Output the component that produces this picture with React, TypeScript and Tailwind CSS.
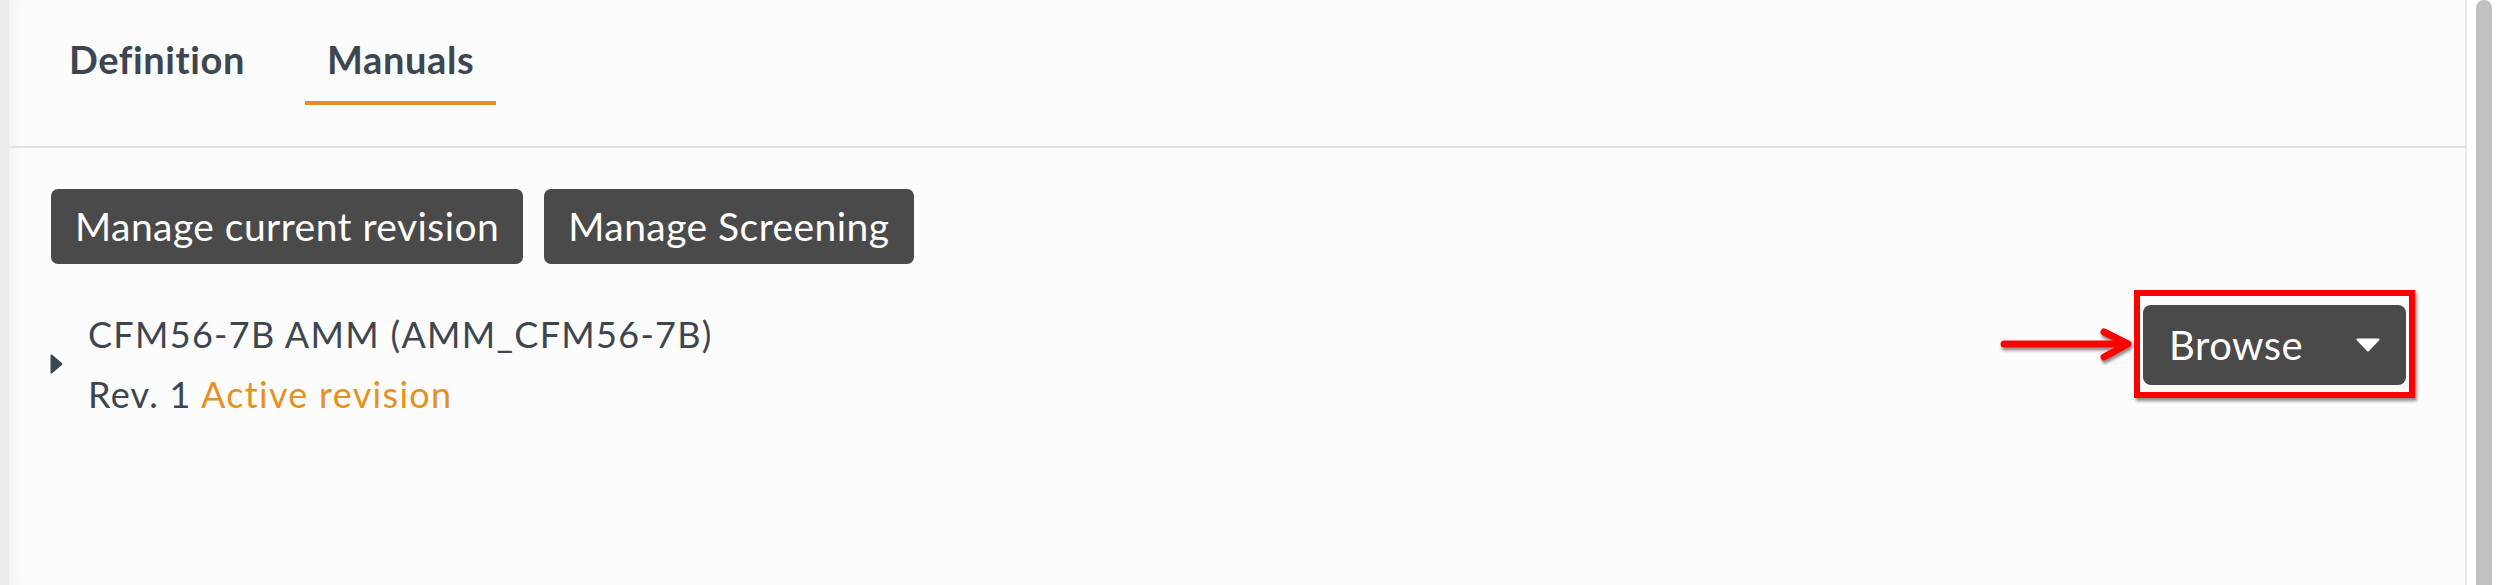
const font = { fontFamily: "Lato, 'Open Sans', Arial, sans-serif" };

function Tab({ label, active }: { label: string; active?: boolean }) {
  return (
    <div
      className={[
        "h-[105px] px-[22px] pt-[40px] text-[38px] font-bold leading-none tracking-[0.6px] text-[#3d4650]",
        active ? "border-b-[4px] border-[#e3901b]" : "border-b-[4px] border-transparent",
      ].join(" ")}
    >
      {label}
    </div>
  );
}

function DarkButton({ children }: { children: string }) {
  return (
    <button
      type="button"
      className="flex h-[75px] items-center rounded-[7px] bg-[#4a4a4a] px-[24px] text-[39px] leading-none tracking-[0.45px] text-white"
    >
      {children}
    </button>
  );
}

function BrowseButton() {
  return (
    <div className="relative mt-[1px] shrink-0">
      {/* annotation overlay */}
      <div className="pointer-events-none absolute -left-[9px] -right-[9px] -top-[15px] -bottom-[13px] border-[6px] border-[#ff0000] shadow-[2px_3px_3px_rgba(0,0,0,0.45)]" />
      <svg
        className="pointer-events-none absolute -left-[143px] top-[22px] overflow-visible"
        width="134"
        height="36"
        viewBox="0 0 134 36"
      >
        <defs>
          <filter id="sh" x="-10%" y="-30%" width="130%" height="180%">
            <feDropShadow dx="1" dy="3" stdDeviation="1.6" floodColor="#000" floodOpacity="0.45" />
          </filter>
        </defs>
        <g filter="url(#sh)" stroke="#ff0000" strokeWidth="7" strokeLinecap="round" strokeLinejoin="round" fill="none">
          <path d="M4 17 H126" />
          <path d="M104 5 L128 17 L104 30" />
        </g>
      </svg>
      <button
        type="button"
        className="flex h-[80px] w-[263px] items-center justify-between rounded-[8px] bg-[#4a4a4a] pl-[26px] pr-[26px] text-[40px] leading-none tracking-[0.5px] text-white"
      >
        <span>Browse</span>
        <svg width="24" height="14" viewBox="0 0 24 14">
          <path d="M1.5 1.5 H22.5 L12 12.5 Z" fill="#fff" stroke="#fff" strokeWidth="2" strokeLinejoin="round" />
        </svg>
      </button>
    </div>
  );
}

export default function App() {
  return (
    <div className="flex h-[585px] w-[2500px] bg-white" style={font}>
      <div className="w-[9px] shrink-0 bg-[#ebebeb]" />

      <div className="flex flex-1 flex-col border-r-2 border-[#e8e8e8] bg-[#fcfcfc] shadow-[inset_14px_0_18px_-12px_rgba(0,0,0,0.06)]">
        <div className="flex h-[148px] shrink-0 gap-[38px] border-b-2 border-[#e2e2e2] pl-[38px]">
          <Tab label="Definition" />
          <Tab label="Manuals" active />
        </div>

        <div className="pl-[42px] pr-[59px] pt-[41px]">
          <div className="flex gap-[21px]">
            <DarkButton>Manage current revision</DarkButton>
            <DarkButton>Manage Screening</DarkButton>
          </div>

          <div className="mt-[40px] flex items-start justify-between">
            <div className="flex items-center">
              <svg className="-ml-[1px] shrink-0" width="13" height="20" viewBox="0 0 13 20">
                <path d="M1.5 1.5 L11.5 10 L1.5 18.5 Z" fill="#3d4650" stroke="#3d4650" strokeWidth="2" strokeLinejoin="round" />
              </svg>
              <div className="ml-[25px] text-[36px] leading-[60px] tracking-[1.3px] text-[#3d4650]">
                <div>CFM56-7B AMM (AMM_CFM56-7B)</div>
                <div>
                  Rev. 1 <span className="text-[#e8901e]">Active revision</span>
                </div>
              </div>
            </div>
            <BrowseButton />
          </div>
        </div>
      </div>

      <div className="flex w-[33px] shrink-0 pl-[9px] pr-[8px]">
        <div className="h-[600px] w-full rounded-full bg-[#c1c1c1]" />
      </div>
    </div>
  );
}
